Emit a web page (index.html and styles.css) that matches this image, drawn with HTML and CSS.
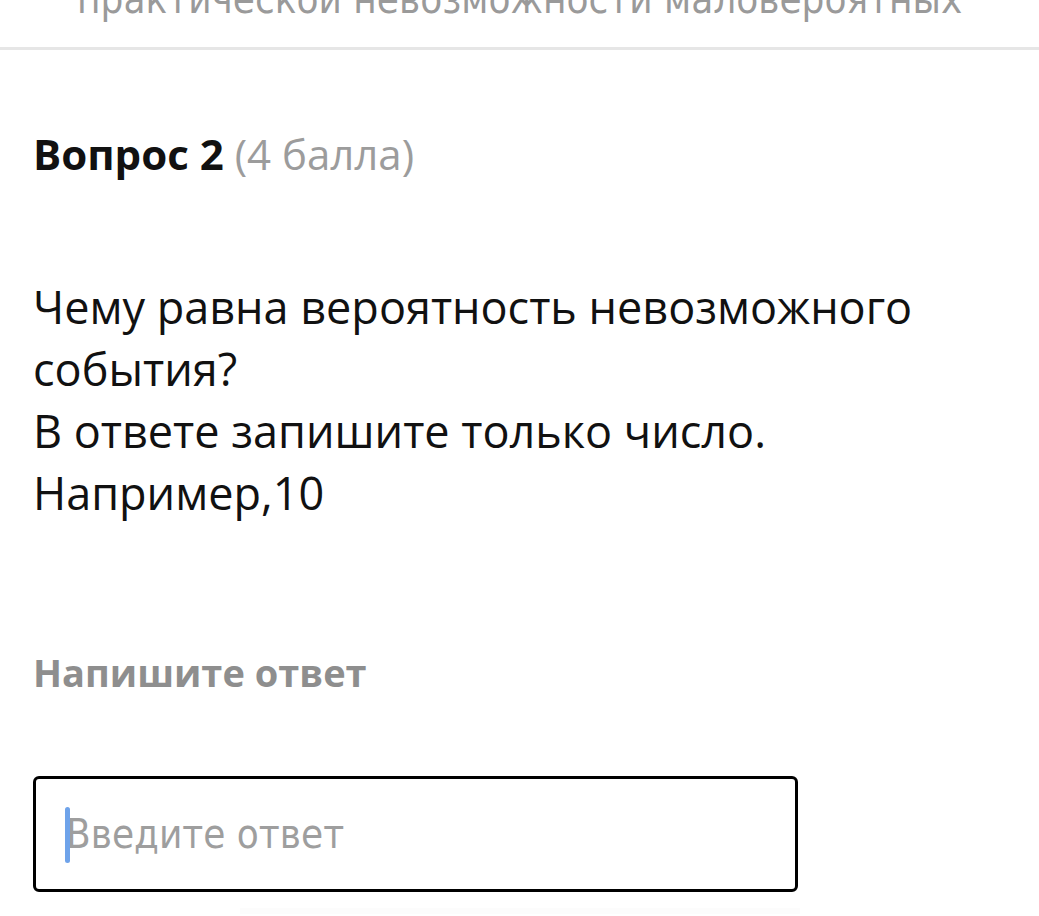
FILE: index.html
```html
<!DOCTYPE html>
<html lang="ru">
    <head>
        <meta name="viewport" content="width=device-width, initial-scale=1">
        <link rel="stylesheet" href="styles.css">
    </head>
    <body>
        <!--Tail of the previous question, scrolled almost out of view-->
        <div class="prev-question">
            <p class="prev-text">практической невозможности маловероятных</p>
        </div>

        <!--Current question-->
        <div class="question">
            <h2 class="question-title">Вопрос 2 <span class="points">(4 балла)</span></h2>

            <p class="question-text">
                Чему равна вероятность невозможного события?<br>
                В ответе запишите только число.<br>
                Например,10
            </p>

            <label class="answer-label" for="answer">Напишите ответ</label>

            <div class="answer-box">
                <span class="caret"></span>
                <input id="answer" class="answer-input" type="text" placeholder="Введите ответ">
            </div>
        </div>
        <div class="next-edge"></div>
    </body>
</html>
```

FILE: styles.css
```css
html {box-sizing: border-box;}
*, *:before, *:after {
    box-sizing: inherit;
}

body {
    margin: 0;
    background: #fff;
    font-family: "Open Sans", "Noto Sans", sans-serif;
    color: #111;
    overflow: hidden;
}

/*Bit of the question above, cut by the top of the screen*/
.prev-question {
    height: 50px;
    border-bottom: 3px solid #e6e6e6;
    overflow: hidden;
}

.prev-text {
    margin: -25px 0 0 77px;
    font-family: "DejaVu Sans", sans-serif;
    font-stretch: condensed;
    font-size: 40px;
    line-height: 48px;
    color: #9a9a9a;
    white-space: nowrap;
}

.question {
    padding: 0 33px;
}

.question-title {
    margin: 74px 0 0 0;
    font-size: 42px;
    font-weight: 700;
    line-height: 60px;
    color: #111;
}

.points {
    font-weight: 400;
    color: #9c9c9c;
}

.question-text {
    margin: 92px 0 0 0;
    width: 960px;
    font-size: 45px;
    line-height: 62px;
}

.answer-label {
    display: block;
    margin-top: 122px;
    font-size: 38px;
    font-weight: 700;
    line-height: 52px;
    color: #8e8e8e;
}

.answer-box {
    position: relative;
    margin-top: 78px;
    width: 765px;
    height: 116px;
    border: 3px solid #000;
    border-radius: 6px;
    display: flex;
    align-items: center;
    padding-left: 30px;
}

.caret {
    position: absolute;
    left: 29px;
    top: 28px;
    width: 5px;
    height: 56px;
    border-radius: 3px;
    background: #6fa3ea;
}

.answer-input {
    border: none;
    outline: none;
    width: 100%;
    padding: 0;
    font-family: "DejaVu Sans", sans-serif;
    font-stretch: condensed;
    font-size: 40px;
    color: #333;
    background: transparent;
}

.answer-input::placeholder {
    color: #9e9e9e;
}

.next-edge {
    margin: 16px 0 0 240px;
    height: 6px;
    width: 560px;
    background: #fcfcfc;
}
```
